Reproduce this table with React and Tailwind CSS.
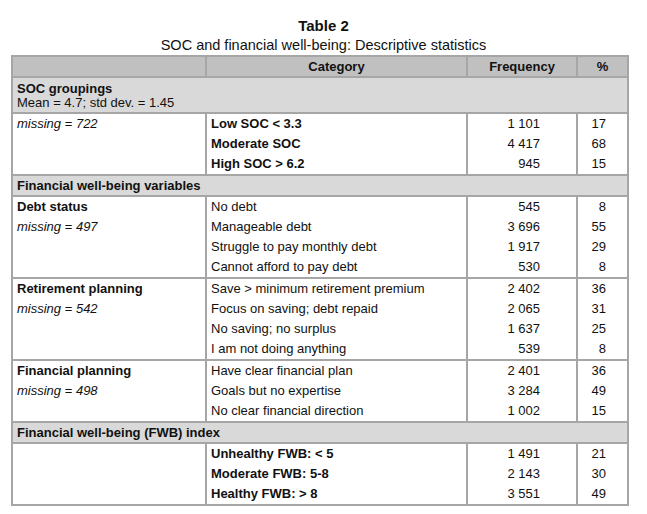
import React from "react";

const font = { fontFamily: '"Liberation Sans", Arial, Helvetica, sans-serif' };

const GRID = "grid grid-cols-[192px_261px_110px_51px]";

function Section({ children, last }) {
  return (
    <div className={`bg-[#d9d9d9] h-[21px] ${last ? "" : "border-b-2 border-[#a6a6a6]"} px-[4px] text-[13px] leading-[19px]`}>
      {children}
    </div>
  );
}

function Group({ left, rows, last }) {
  const n = rows.length;
  const leftLines = [...left];
  while (leftLines.length < n) leftLines.push(null);
  return (
    <div className={`${GRID} bg-white text-[13px] ${last ? "" : "border-b-2 border-[#a6a6a6]"}`}>
      <div className="flex flex-col px-[4px]">
        {leftLines.map((l, i) => (
          <div key={i} className="h-[20px] leading-[20px] whitespace-nowrap">{l}</div>
        ))}
      </div>
      <div className="flex flex-col border-l-2 border-[#a6a6a6] pl-[4px]">
        {rows.map((r, i) => (
          <div key={i} className={`h-[20px] leading-[20px] whitespace-nowrap ${r.bold ? "font-bold" : ""}`}>{r.c}</div>
        ))}
      </div>
      <div className="flex flex-col border-l-2 border-[#a6a6a6] pr-[36px] text-right">
        {rows.map((r, i) => (
          <div key={i} className="h-[20px] leading-[20px]">{r.f}</div>
        ))}
      </div>
      <div className="flex flex-col border-l-2 border-[#a6a6a6] pr-[21px] text-right">
        {rows.map((r, i) => (
          <div key={i} className="h-[20px] leading-[20px]">{r.p}</div>
        ))}
      </div>
    </div>
  );
}

export default function App() {
  const miss = (n) => (
    <span>
      <i>missing</i> = <i>{n}</i>
    </span>
  );
  return (
    <div className="w-[647px] h-[514px] bg-white text-[#111] overflow-hidden" style={font}>
      <div className="pt-[17px] flex flex-col items-center">
        <div className="text-[15px] leading-[18px] font-bold">Table 2</div>
        <div className="text-[14.5px] leading-[18px] mt-[1px]">SOC and financial well-being: Descriptive statistics</div>
      </div>
      <div className="ml-[11px] mt-[1px] w-[618px] border-2 border-[#a6a6a6]">
        <div className={`${GRID} bg-[#c0c0c0] h-[21px] border-b-2 border-[#a6a6a6] text-[13px] font-bold leading-[19px]`}>
          <div></div>
          <div className="border-l-2 border-[#a6a6a6] text-center">Category</div>
          <div className="border-l-2 border-[#a6a6a6] text-center">Frequency</div>
          <div className="border-l-2 border-[#a6a6a6] text-center">%</div>
        </div>
        <div className="bg-[#d9d9d9] h-[36px] border-b-2 border-[#a6a6a6] px-[4px] pt-[4px] text-[13px] leading-[14px]">
          <div className="font-bold">SOC groupings</div>
          <div>Mean = 4.7; std dev. = 1.45</div>
        </div>
        <Group
          left={[miss("722")]}
          rows={[
            { c: "Low SOC < 3.3", f: "1 101", p: "17", bold: true },
            { c: "Moderate SOC", f: "4 417", p: "68", bold: true },
            { c: "High SOC > 6.2", f: "945", p: "15", bold: true },
          ]}
        />
        <Section>
          <span className="font-bold">Financial well-being variables</span>
        </Section>
        <Group
          left={[<b>Debt status</b>, miss("497")]}
          rows={[
            { c: "No debt", f: "545", p: "8" },
            { c: "Manageable debt", f: "3 696", p: "55" },
            { c: "Struggle to pay monthly debt", f: "1 917", p: "29" },
            { c: "Cannot afford to pay debt", f: "530", p: "8" },
          ]}
        />
        <Group
          left={[<b>Retirement planning</b>, miss("542")]}
          rows={[
            { c: "Save > minimum retirement premium", f: "2 402", p: "36" },
            { c: "Focus on saving; debt repaid", f: "2 065", p: "31" },
            { c: "No saving; no surplus", f: "1 637", p: "25" },
            { c: "I am not doing anything", f: "539", p: "8" },
          ]}
        />
        <Group
          left={[<b>Financial planning</b>, miss("498")]}
          rows={[
            { c: "Have clear financial plan", f: "2 401", p: "36" },
            { c: "Goals but no expertise", f: "3 284", p: "49" },
            { c: "No clear financial direction", f: "1 002", p: "15" },
          ]}
        />
        <Section>
          <span className="font-bold">Financial well-being (FWB) index</span>
        </Section>
        <Group
          last
          left={[]}
          rows={[
            { c: "Unhealthy FWB: < 5", f: "1 491", p: "21", bold: true },
            { c: "Moderate FWB: 5-8", f: "2 143", p: "30", bold: true },
            { c: "Healthy FWB: > 8", f: "3 551", p: "49", bold: true },
          ]}
        />
      </div>
    </div>
  );
}
